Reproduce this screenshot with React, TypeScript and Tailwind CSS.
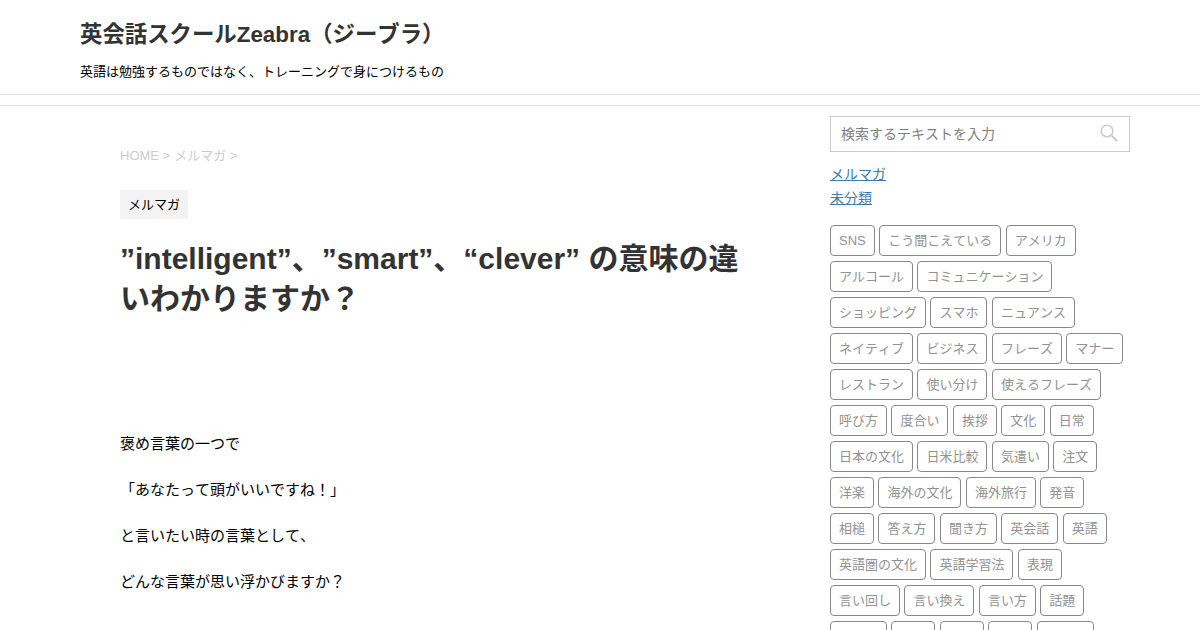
const tags = [
  ["SNS", "こう聞こえている", "アメリカ"],
  ["アルコール", "コミュニケーション"],
  ["ショッピング", "スマホ", "ニュアンス"],
  ["ネイティブ", "ビジネス", "フレーズ", "マナー"],
  ["レストラン", "使い分け", "使えるフレーズ"],
  ["呼び方", "度合い", "挨拶", "文化", "日常"],
  ["日本の文化", "日米比較", "気遣い", "注文"],
  ["洋楽", "海外の文化", "海外旅行", "発音"],
  ["相槌", "答え方", "聞き方", "英会話", "英語"],
  ["英語圏の文化", "英語学習法", "表現"],
  ["言い回し", "言い換え", "言い方", "話題"],
  ["語学力", "語彙", "謙遜", "質問", "間違い"],
];

const paragraphs = [
  "褒め言葉の一つで",
  "「あなたって頭がいいですね！」",
  "と言いたい時の言葉として、",
  "どんな言葉が思い浮かびますか？",
];

export default function App() {
  return (
    <div className="h-[630px] overflow-hidden bg-white font-['Liberation_Sans','Noto_Sans_CJK_JP',sans-serif] text-[#333] [text-spacing-trim:space-all] [font-kerning:none]">
      <header className="h-[95px] border-b border-[#ddd] pl-20 pt-[19px]">
        <div className="text-[22.4px] leading-[31px] font-bold">英会話スクールZeabra（ジーブラ）</div>
        <div className="mt-[12px] text-[13px] leading-[20px] text-black">英語は勉強するものではなく、トレーニングで身につけるもの</div>
      </header>
      <div className="mt-[10px] flex border-t border-[#ddd]">
        <main className="w-[830px] pt-[40px] pl-[120px] pr-[80px]">
          <div className="flex gap-[4px] text-[13px] leading-[20px] text-[#ccc]">
            <span>HOME &gt;</span>
            <span>メルマガ &gt;</span>
          </div>
          <div className="mt-[24px] inline-block bg-[#f3f3f3] px-2 py-[5px] text-[13px] leading-[19px] text-black">メルマガ</div>
          <h1 className="mt-[20px] text-[30px] leading-[40px] font-bold">”intelligent”、”smart”、“clever” の意味の違いわかりますか？</h1>
          <div className="mt-[113px] text-[15px] leading-[24px] text-black">
            {paragraphs.map((p) => (
              <p key={p} className="mb-[22px]">{p}</p>
            ))}
          </div>
        </main>
        <aside className="w-[300px] pt-[10px]">
          <div className="flex h-9 items-center justify-between border border-[#ccc] pl-[10px] pr-[11px]">
            <span className="text-[14px] text-[#808080]">検索するテキストを入力</span>
            <svg className="mb-[2px]" width="18" height="18" viewBox="0 0 18 18" fill="none" stroke="#ccc" strokeWidth="1.6">
              <circle cx="7" cy="7" r="5.8" />
              <path d="M11.5 11.5 L17 17" strokeWidth="2" />
            </svg>
          </div>
          <div className="mt-[10px] text-[14px] leading-[24px] text-[#3d7ca8] underline">
            <div>メルマガ</div>
            <div>未分類</div>
          </div>
          <div className="mt-[15px] flex flex-col gap-[5px]">
            {tags.map((row, i) => (
              <div key={i} className="flex gap-[4.45px]">
                {row.map((t) => (
                  <span key={t} className="h-[31px] rounded border border-[#888] px-2 text-[13px] leading-[29px] whitespace-nowrap text-[#929292]">{t}</span>
                ))}
              </div>
            ))}
          </div>
        </aside>
      </div>
    </div>
  );
}
